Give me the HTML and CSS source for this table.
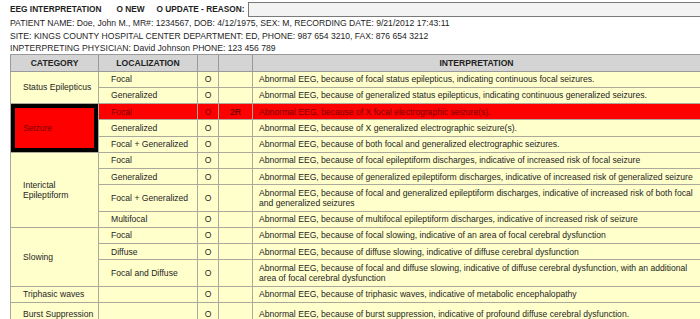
FILE: index.html
```html
<!DOCTYPE html>
<html>
<head>
<meta charset="utf-8">
<link rel="stylesheet" href="styles.css">
</head>
<body>
<div class="page">
  <div class="title-line">
    <span class="t-main">EEG INTERPRETATION</span>
    <span class="t-opt">O NEW</span>
    <span class="t-opt">O UPDATE - REASON:</span>
    <div class="reason"></div>
  </div>
  <div class="info">PATIENT NAME: Doe, John M., MR#: 1234567, DOB: 4/12/1975, SEX: M, RECORDING DATE: 9/21/2012 17:43:11</div>
  <div class="info">SITE: KINGS COUNTY HOSPITAL CENTER DEPARTMENT: ED, PHONE: 987 654 3210, FAX: 876 654 3212</div>
  <div class="info">INPTERPRETING PHYSICIAN: David Johnson PHONE: 123 456 789</div>
  <table class="grid">
    <colgroup>
      <col class="c-cat"><col class="c-loc"><col class="c-o"><col class="c-code"><col class="c-int">
    </colgroup>
    <thead>
      <tr><th>CATEGORY</th><th>LOCALIZATION</th><th></th><th></th><th>INTERPRETATION</th></tr>
    </thead>
    <tbody>
      <tr><td class="cat" rowspan="2">Status Epilepticus</td><td class="loc">Focal</td><td class="o">O</td><td></td><td class="int">Abnormal EEG, because of focal status epilepticus, indicating continuous focal seizures.</td></tr>
      <tr><td class="loc">Generalized</td><td class="o">O</td><td></td><td class="int">Abnormal EEG, because of generalized status epilepticus, indicating continuous generalized seizures.</td></tr>
      <tr class="hit"><td class="cat sel" rowspan="3">Seizure</td><td class="loc">Focal</td><td class="o">O</td><td class="code">2R</td><td class="int">Abnormal EEG, because of X focal electrographic seizure(s).</td></tr>
      <tr><td class="loc">Generalized</td><td class="o">O</td><td></td><td class="int">Abnormal EEG, because of X generalized electrographic seizure(s).</td></tr>
      <tr><td class="loc">Focal + Generalized</td><td class="o">O</td><td></td><td class="int">Abnormal EEG, because of both focal and generalized electrographic seizures.</td></tr>
      <tr><td class="cat" rowspan="4">Interictal<br>Epileptiform</td><td class="loc">Focal</td><td class="o">O</td><td></td><td class="int">Abnormal EEG, because of focal epileptiform discharges, indicative of increased risk of focal seizure</td></tr>
      <tr><td class="loc">Generalized</td><td class="o">O</td><td></td><td class="int">Abnormal EEG, because of generalized epileptiform discharges, indicative of increased risk of generalized seizure</td></tr>
      <tr><td class="loc">Focal + Generalized</td><td class="o">O</td><td></td><td class="int">Abnormal EEG, because of focal and generalized epileptiform discharges, indicative of increased risk of both focal and generalized seizures</td></tr>
      <tr><td class="loc">Multifocal</td><td class="o">O</td><td></td><td class="int">Abnormal EEG, because of multifocal epileptiform discharges, indicative of increased risk of seizure</td></tr>
      <tr><td class="cat" rowspan="3">Slowing</td><td class="loc">Focal</td><td class="o">O</td><td></td><td class="int">Abnormal EEG, because of focal slowing, indicative of an area of focal cerebral dysfunction</td></tr>
      <tr><td class="loc">Diffuse</td><td class="o">O</td><td></td><td class="int">Abnormal EEG, because of diffuse slowing, indicative of diffuse cerebral dysfunction</td></tr>
      <tr><td class="loc">Focal and Diffuse</td><td class="o">O</td><td></td><td class="int">Abnormal EEG, because of focal and diffuse slowing, indicative of diffuse cerebral dysfunction, with an additional area of focal cerebral dysfunction</td></tr>
      <tr><td class="cat">Triphasic waves</td><td class="loc"></td><td class="o">O</td><td></td><td class="int">Abnormal EEG, because of triphasic waves, indicative of metabolic encephalopathy</td></tr>
      <tr class="tall"><td class="cat">Burst Suppression</td><td class="loc"></td><td class="o">O</td><td></td><td class="int">Abnormal EEG, because of burst suppression, indicative of profound diffuse cerebral dysfunction.</td></tr>
    </tbody>
  </table>
</div>
</body>
</html>
```

FILE: styles.css
```css
html, body {
  margin: 0;
  padding: 0;
  background: #ffffff;
}
body {
  font-family: "Liberation Sans", Arial, sans-serif;
  font-size: 8.6px;
  color: #1e1e1e;
  overflow: hidden;
}
.page {
  padding: 1px 0 0 10px;
}
.title-line {
  display: flex;
  align-items: center;
  height: 16px;
  font-weight: bold;
  font-size: 8.3px;
}
.t-main {
  margin-right: 15px;
}
.t-opt {
  margin-right: 12px;
}
.t-opt:last-of-type {
  margin-right: 4px;
}
.reason {
  flex: 1;
  height: 13px;
  border: 1px solid #7a7a7a;
  border-right: none;
  background: #f3f3f3;
}
.info {
  height: 12.5px;
  line-height: 12.5px;
  white-space: nowrap;
}
.grid {
  margin-top: -1px;
  width: 690px;
  border-collapse: collapse;
  table-layout: fixed;
}
.c-cat { width: 88px; }
.c-loc { width: 99px; }
.c-o { width: 21px; }
.c-code { width: 34px; }
.c-int { width: 448px; }
.grid th {
  background: #d4d4d4;
  border: 1px solid #9a9a9a;
  font-weight: bold;
  height: 16px;
  padding: 0;
  text-align: center;
  color: #222;
}
.grid td {
  background: #ffffcc;
  border: 1px solid #aaa99c;
  padding: 2.5px 6px 2.75px 6px;
  line-height: 10px;
  vertical-align: middle;
}
.grid td.cat {
  padding-left: 12px;
  white-space: nowrap;
}
.grid td.loc {
  padding-left: 12px;
}
.grid td.o {
  text-align: center;
  padding: 0;
}
.grid td.code {
  text-align: center;
  padding: 0;
  font-weight: bold;
}
.grid tr.hit td {
  background: #ff0000;
  color: #7a0000;
}
.grid td.sel {
  background: #ff0000;
  color: #7a0000;
  box-shadow: inset 0 0 0 4px #000;
}
.grid tr.tall td {
  padding-top: 6.5px;
  padding-bottom: 5px;
}
```
